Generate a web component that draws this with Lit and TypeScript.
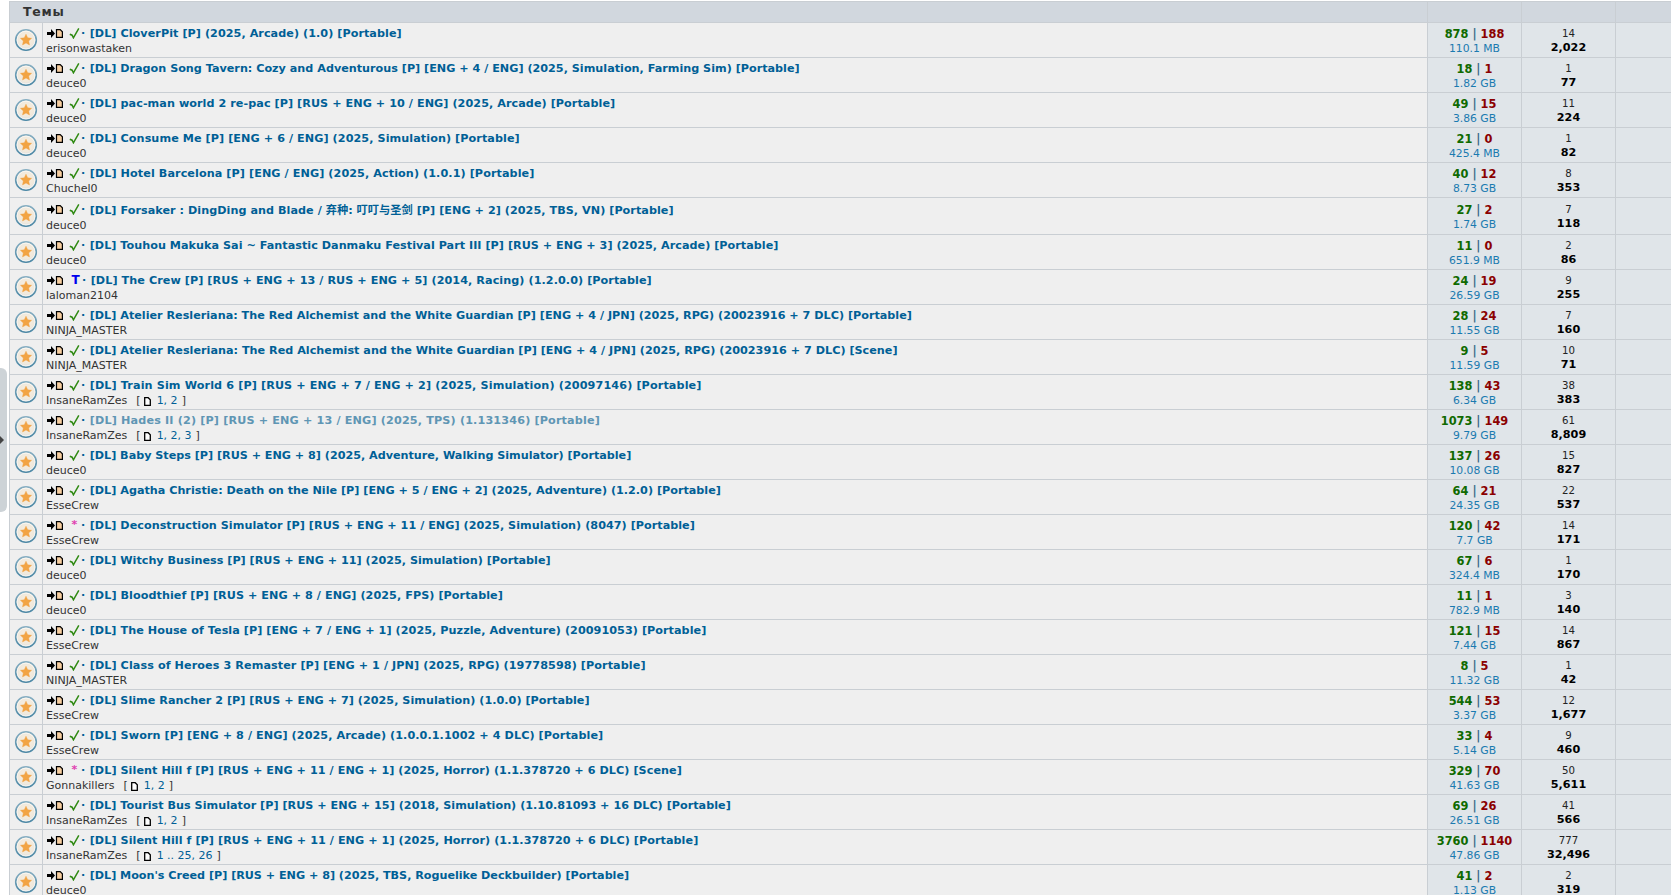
import { LitElement, html, css } from "lit";
import { customElement } from "lit/decorators.js";
import { styleMap } from "lit/directives/style-map.js";

type Row = { t: string; a: string; s: number; l: number; z: string; r: number; d: string; ls: number; m?: string; p?: string; dim?: boolean; tall?: boolean };
const rows: Row[] = [
  { ls: 0.05, t: "[DL] CloverPit [P] (2025, Arcade) (1.0) [Portable]", a: "erisonwastaken", s: 878, l: 188, z: "110.1 MB", r: 14, d: "2,022" },
  { ls: 0, t: "[DL] Dragon Song Tavern: Cozy and Adventurous [P] [ENG + 4 / ENG] (2025, Simulation, Farming Sim) [Portable]", a: "deuce0", s: 18, l: 1, z: "1.82 GB", r: 1, d: "77" },
  { ls: 0.058, t: "[DL] pac-man world 2 re-pac [P] [RUS + ENG + 10 / ENG] (2025, Arcade) [Portable]", a: "deuce0", s: 49, l: 15, z: "3.86 GB", r: 11, d: "224" },
  { ls: 0.07, t: "[DL] Consume Me [P] [ENG + 6 / ENG] (2025, Simulation) [Portable]", a: "deuce0", s: 21, l: 0, z: "425.4 MB", r: 1, d: "82" },
  { ls: 0.08, t: "[DL] Hotel Barcelona [P] [ENG / ENG] (2025, Action) (1.0.1) [Portable]", a: "Chuchel0", s: 40, l: 12, z: "8.73 GB", r: 8, d: "353" },
  { ls: 0.04, t: "[DL] Forsaker : DingDing and Blade / 弃种: 叮叮与圣剑 [P] [ENG + 2] (2025, TBS, VN) [Portable]", a: "deuce0", s: 27, l: 2, z: "1.74 GB", r: 7, d: "118", tall: true },
  { ls: 0.025, t: "[DL] Touhou Makuka Sai ~ Fantastic Danmaku Festival Part III [P] [RUS + ENG + 3] (2025, Arcade) [Portable]", a: "deuce0", s: 11, l: 0, z: "651.9 MB", r: 2, d: "86" },
  { ls: 0.067, t: "[DL] The Crew [P] [RUS + ENG + 13 / RUS + ENG + 5] (2014, Racing) (1.2.0.0) [Portable]", a: "laloman2104", s: 24, l: 19, z: "26.59 GB", r: 9, d: "255", m: "T" },
  { ls: 0, t: "[DL] Atelier Resleriana: The Red Alchemist and the White Guardian [P] [ENG + 4 / JPN] (2025, RPG) (20023916 + 7 DLC) [Portable]", a: "NINJA_MASTER", s: 28, l: 24, z: "11.55 GB", r: 7, d: "160" },
  { ls: 0.013, t: "[DL] Atelier Resleriana: The Red Alchemist and the White Guardian [P] [ENG + 4 / JPN] (2025, RPG) (20023916 + 7 DLC) [Scene]", a: "NINJA_MASTER", s: 9, l: 5, z: "11.59 GB", r: 10, d: "71" },
  { ls: 0.12, t: "[DL] Train Sim World 6 [P] [RUS + ENG + 7 / ENG + 2] (2025, Simulation) (20097146) [Portable]", a: "InsaneRamZes", s: 138, l: 43, z: "6.34 GB", r: 38, d: "383", p: "1, 2" },
  { ls: 0.155, t: "[DL] Hades II (2) [P] [RUS + ENG + 13 / ENG] (2025, TPS) (1.131346) [Portable]", a: "InsaneRamZes", s: 1073, l: 149, z: "9.79 GB", r: 61, d: "8,809", p: "1, 2, 3", dim: true },
  { ls: -0.02, t: "[DL] Baby Steps [P] [RUS + ENG + 8] (2025, Adventure, Walking Simulator) [Portable]", a: "deuce0", s: 137, l: 26, z: "10.08 GB", r: 15, d: "827" },
  { ls: 0, t: "[DL] Agatha Christie: Death on the Nile [P] [ENG + 5 / ENG + 2] (2025, Adventure) (1.2.0) [Portable]", a: "EsseCrew", s: 64, l: 21, z: "24.35 GB", r: 22, d: "537" },
  { ls: 0.028, t: "[DL] Deconstruction Simulator [P] [RUS + ENG + 11 / ENG] (2025, Simulation) (8047) [Portable]", a: "EsseCrew", s: 120, l: 42, z: "7.7 GB", r: 14, d: "171", m: "*" },
  { ls: 0, t: "[DL] Witchy Business [P] [RUS + ENG + 11] (2025, Simulation) [Portable]", a: "deuce0", s: 67, l: 6, z: "324.4 MB", r: 1, d: "170" },
  { ls: 0.057, t: "[DL] Bloodthief [P] [RUS + ENG + 8 / ENG] (2025, FPS) [Portable]", a: "deuce0", s: 11, l: 1, z: "782.9 MB", r: 3, d: "140" },
  { ls: 0.05, t: "[DL] The House of Tesla [P] [ENG + 7 / ENG + 1] (2025, Puzzle, Adventure) (20091053) [Portable]", a: "EsseCrew", s: 121, l: 15, z: "7.44 GB", r: 14, d: "867" },
  { ls: 0.08, t: "[DL] Class of Heroes 3 Remaster [P] [ENG + 1 / JPN] (2025, RPG) (19778598) [Portable]", a: "NINJA_MASTER", s: 8, l: 5, z: "11.32 GB", r: 1, d: "42" },
  { ls: 0.02, t: "[DL] Slime Rancher 2 [P] [RUS + ENG + 7] (2025, Simulation) (1.0.0) [Portable]", a: "EsseCrew", s: 544, l: 53, z: "3.37 GB", r: 12, d: "1,677" },
  { ls: 0.073, t: "[DL] Sworn [P] [ENG + 8 / ENG] (2025, Arcade) (1.0.0.1.1002 + 4 DLC) [Portable]", a: "EsseCrew", s: 33, l: 4, z: "5.14 GB", r: 9, d: "460" },
  { ls: 0.056, t: "[DL] Silent Hill f [P] [RUS + ENG + 11 / ENG + 1] (2025, Horror) (1.1.378720 + 6 DLC) [Scene]", a: "Gonnakillers", s: 329, l: 70, z: "41.63 GB", r: 50, d: "5,611", m: "*", p: "1, 2" },
  { ls: 0.016, t: "[DL] Tourist Bus Simulator [P] [RUS + ENG + 15] (2018, Simulation) (1.10.81093 + 16 DLC) [Portable]", a: "InsaneRamZes", s: 69, l: 26, z: "26.51 GB", r: 41, d: "566", p: "1, 2" },
  { ls: 0.06, t: "[DL] Silent Hill f [P] [RUS + ENG + 11 / ENG + 1] (2025, Horror) (1.1.378720 + 6 DLC) [Portable]", a: "InsaneRamZes", s: 3760, l: 1140, z: "47.86 GB", r: 777, d: "32,496", p: "1 .. 25, 26" },
  { ls: -0.03, t: "[DL] Moon's Creed [P] [RUS + ENG + 8] (2025, TBS, Roguelike Deckbuilder) [Portable]", a: "deuce0", s: 41, l: 2, z: "1.13 GB", r: 2, d: "319" },
];

const star = html`<svg class="star" viewBox="0 0 24 24" width="24" height="24">
  <defs>
    <radialGradient id="g" cx="50%" cy="45%" r="55%"><stop offset="0" stop-color="#f6eee0"/><stop offset=".7" stop-color="#f1e9dc"/><stop offset="1" stop-color="#d3dbdf"/></radialGradient>
    <linearGradient id="r" x1="0" y1="0" x2="0" y2="1"><stop offset="0" stop-color="#86aec2"/><stop offset="1" stop-color="#4a87a5"/></linearGradient>
  </defs>
  <circle cx="12" cy="12" r="10.300" fill="url(#g)" stroke="url(#r)" stroke-width="1.600"/>
  <circle cx="12" cy="12" r="8.900" fill="none" stroke="#ffffff" stroke-width=".8" opacity=".8"/>
  <path d="M12 6.200l1.700 3.600 3.900.5-2.900 2.700.8 3.900L12 15l-3.500 1.900.8-3.900-2.900-2.700 3.900-.5z" fill="#f2a444" stroke="#ef9f40" stroke-width=".4"/>
</svg>`;
const arrow = html`<svg class="ico" viewBox="0 0 16 9" width="16" height="9">
  <path d="M0 3h4V0l4 4.500L4 9V6H0z" fill="#000"/>
  <path d="M9.500 .6h3.700l2.200 2.200v5.600h-5.900z" fill="#f8cfa0" stroke="#000" stroke-width="1.200"/>
</svg>`;
const check = html`<svg class="chk" viewBox="0 0 11 11" width="11" height="11">
  <path d="M.8 6.200l2.300 1 1.300 2.600L9.800 .4" fill="none" stroke="#2f8a12" stroke-width="1.500"/>
</svg>`;
const pageIco = html`<svg class="pg" viewBox="0 0 7 9" width="7" height="9"><path d="M.7 .7h3.500l2.100 2.100v5.500H.7z" fill="#fff" stroke="#000" stroke-width="1.300"/></svg>`;

@customElement("app-root")
export class AppRoot extends LitElement {
  static styles = css`
    :host { display: block; width: 1671px; height: 895px; overflow: hidden; background: #fff; font-family: "DejaVu Sans", Verdana, sans-serif; position: relative; }
    .handle { position: absolute; left: 0; top: 368px; width: 7px; height: 144px; background: #cdd3d7; border-radius: 0 6px 6px 0; }
    .handle::after { content: ""; position: absolute; left: 0; top: 68px; border-left: 4px solid #444; border-top: 4px solid transparent; border-bottom: 4px solid transparent; }
    .wrap { margin: 1px 0 0 9px; }
    .row { display: grid; grid-template-columns: 34px 1385px 94px 94px 55px; border-bottom: 1px solid #c9ced3; }
    .head { height: 20px; background: #d1d7de; border-top: 1px solid #c9ced3; font-weight: bold; font-size: 12.500px; letter-spacing: 0.8px; color: #333; line-height: 19px; }
    .head .t { grid-column: 1 / 3; padding-left: 13px; border-right: 1px solid #c9ced3; border-left: 1px solid #c9ced3; }
    .head .c { border-right: 1px solid #c9ced3; }
    .cell { box-sizing: border-box; border-right: 1px solid #c9ced3; min-height: 34px; }
    .tall .cell { min-height: 36px; }
    .ic { background: #efefef; display: flex; align-items: center; justify-content: center; border-left: 1px solid #c9ced3; }
    .main { background: #efefef; padding: 2px 4px 0; }
    .stat { background: #e0e5e9; text-align: center; display: flex; flex-direction: column; justify-content: center; padding-top: 2px; }
    .last { background: #e0e5e9; border-right: 0; }
    .tl { display: flex; align-items: center; height: 16px; white-space: nowrap; font-family: "DejaVu Sans", "Noto Sans CJK SC", sans-serif; }
    .tall .tl { height: 18px; }
    .title { font-size: 11.200px; font-weight: bold; color: #005f96; }
    .title.dim { color: #5f96b4; }
    .ico { margin-right: 6px; flex: none; }
    .chk { margin-right: 1px; flex: none; }
    .mark { width: 11px; text-align: center; margin-right: 1px; font-size: 12px; font-weight: bold; flex: none; }
    .mark.t { color: #0000ee; margin-right: 2px; position: relative; left: 1px; }
    .mark.s { color: #e040b0; font-size: 11px; position: relative; top: -1px; }
    .dot { margin-right: 4.500px; font-size: 11px; font-weight: bold; color: #005f96; }
    .au { font-size: 11px; color: #333; line-height: 14px; display: flex; align-items: center; margin: 1px 0 0 -1px; }
    .pgs { margin-left: 9px; display: inline-flex; align-items: center; }
    .pgs b { font-weight: normal; color: #005f96; margin: 0 4px 0 6px; }
    .pgs .pg { margin-left: 3px; }
    .sl { font-size: 11.400px; font-weight: bold; line-height: 16px; color: #3a6a88; }
    .sd { color: #0f6a00; }
    .lc { color: #8b0000; }
    .sz { font-size: 10.800px; line-height: 14px; color: #1a7ab0; }
    .rp { font-size: 10.200px; line-height: 14px; color: #222; }
    .dl { font-size: 11.200px; font-weight: bold; line-height: 14px; color: #000; }
  `;
  render() {
    return html`
      <div class="handle"></div>
      <div class="wrap">
        <div class="row head"><div class="t">Темы</div><div class="c"></div><div class="c"></div><div></div></div>
        ${rows.map((r) => html`
          <div class="row ${r.tall ? "tall" : ""}">
            <div class="cell ic">${star}</div>
            <div class="cell main">
              <div class="tl">${arrow}${r.m === "T" ? html`<span class="mark t">T</span>` : r.m === "*" ? html`<span class="mark s">*</span>` : check}<span class="dot">·</span><span class="title ${r.dim ? "dim" : ""}" style=${styleMap({ letterSpacing: r.ls + "px" })}>${r.t}</span></div>
              <div class="au">${r.a}${r.p ? html`<span class="pgs">[${pageIco}<b>${r.p}</b>]</span>` : ""}</div>
            </div>
            <div class="cell stat">
              <div class="sl"><span class="sd">${r.s}</span> | <span class="lc">${r.l}</span></div>
              <div class="sz">${r.z}</div>
            </div>
            <div class="cell stat">
              <div class="rp">${r.r}</div>
              <div class="dl">${r.d}</div>
            </div>
            <div class="cell last"></div>
          </div>`)}
      </div>`;
  }
}
